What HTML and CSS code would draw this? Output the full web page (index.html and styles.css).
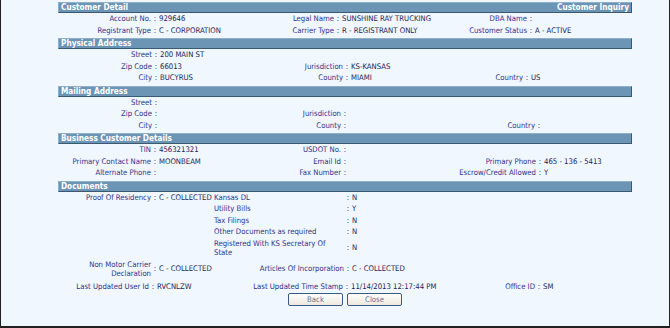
FILE: index.html
```html
<!DOCTYPE html>
<html>

<head>
    <link rel="stylesheet" href="styles.css">
</head>

<body>
    <div class="page">
        <div class="panel">
            <div class="bar"><span>Customer Detail</span><span>Customer Inquiry</span></div>
            <div class="fields customer">
                <span class="lbl">Account No.</span><span class="sep">:</span><span class="val">929646</span>
                <span class="lbl">Legal Name</span><span class="sep">:</span><span class="val">SUNSHINE RAY TRUCKING</span>
                <span class="lbl">DBA Name</span><span class="sep">:</span><span class="val"></span>
                <span class="lbl">Registrant Type</span><span class="sep">:</span><span class="val">C - CORPORATION</span>
                <span class="lbl">Carrier Type</span><span class="sep">:</span><span class="val">R - REGISTRANT ONLY</span>
                <span class="lbl">Customer Status</span><span class="sep">:</span><span class="val">A - ACTIVE</span>
            </div>

            <div class="bar"><span>Physical Address</span></div>
            <div class="fields physical">
                <span class="lbl">Street</span><span class="sep">:</span><span class="val">200 MAIN ST</span>
                <span class="lbl"></span><span class="sep"></span><span class="val"></span>
                <span class="lbl"></span><span class="sep"></span><span class="val"></span>
                <span class="lbl">Zip Code</span><span class="sep">:</span><span class="val">66013</span>
                <span class="lbl">Jurisdiction</span><span class="sep">:</span><span class="val">KS-KANSAS</span>
                <span class="lbl"></span><span class="sep"></span><span class="val"></span>
                <span class="lbl">City</span><span class="sep">:</span><span class="val">BUCYRUS</span>
                <span class="lbl">County</span><span class="sep">:</span><span class="val">MIAMI</span>
                <span class="lbl">Country</span><span class="sep">:</span><span class="val">US</span>
            </div>

            <div class="bar"><span>Mailing Address</span></div>
            <div class="fields mailing">
                <span class="lbl">Street</span><span class="sep">:</span><span class="val"></span>
                <span class="lbl"></span><span class="sep"></span><span class="val"></span>
                <span class="lbl"></span><span class="sep"></span><span class="val"></span>
                <span class="lbl">Zip Code</span><span class="sep">:</span><span class="val"></span>
                <span class="lbl">Jurisdiction</span><span class="sep">:</span><span class="val"></span>
                <span class="lbl"></span><span class="sep"></span><span class="val"></span>
                <span class="lbl">City</span><span class="sep">:</span><span class="val"></span>
                <span class="lbl">County</span><span class="sep">:</span><span class="val"></span>
                <span class="lbl">Country</span><span class="sep">:</span><span class="val"></span>
            </div>

            <div class="bar"><span>Business Customer Details</span></div>
            <div class="fields business">
                <span class="lbl">TIN</span><span class="sep">:</span><span class="val">456321321</span>
                <span class="lbl">USDOT No.</span><span class="sep">:</span><span class="val"></span>
                <span class="lbl"></span><span class="sep"></span><span class="val"></span>
                <span class="lbl">Primary Contact Name</span><span class="sep">:</span><span class="val">MOONBEAM</span>
                <span class="lbl">Email Id</span><span class="sep">:</span><span class="val"></span>
                <span class="lbl">Primary Phone</span><span class="sep">:</span><span class="val">465 - 136 - 5413</span>
                <span class="lbl">Alternate Phone</span><span class="sep">:</span><span class="val"></span>
                <span class="lbl">Fax Number</span><span class="sep">:</span><span class="val"></span>
                <span class="lbl">Escrow/Credit Allowed</span><span class="sep">:</span><span class="val">Y</span>
            </div>

            <div class="bar"><span>Documents</span></div>
            <div class="docs">
                <span class="lbl">Proof Of Residency</span><span class="sep">:</span><span class="val">C - COLLECTED</span>
                <span class="item">Kansas DL</span><span class="sep">:</span><span class="val">N</span>

                <span class="lbl"></span><span class="sep"></span><span class="val"></span>
                <span class="item">Utility Bills</span><span class="sep">:</span><span class="val">Y</span>

                <span class="lbl"></span><span class="sep"></span><span class="val"></span>
                <span class="item">Tax Filings</span><span class="sep">:</span><span class="val">N</span>

                <span class="lbl"></span><span class="sep"></span><span class="val"></span>
                <span class="item">Other Documents as required</span><span class="sep">:</span><span class="val">N</span>

                <span class="lbl"></span><span class="sep"></span><span class="val"></span>
                <span class="item">Registered With KS Secretary Of State</span><span class="sep">:</span><span class="val">N</span>

                <span class="lbl">Non Motor Carrier Declaration</span><span class="sep">:</span><span class="val">C - COLLECTED</span>
                <span class="item right">Articles Of Incorporation</span><span class="sep">:</span><span class="val">C - COLLECTED</span>
            </div>

            <div class="fields updated">
                <span class="lbl">Last Updated User Id</span><span class="sep">:</span><span class="val">RVCNLZW</span>
                <span class="lbl">Last Updated Time Stamp</span><span class="sep">:</span><span class="val">11/14/2013 12:17:44 PM</span>
                <span class="lbl">Office ID</span><span class="sep">:</span><span class="val">SM</span>
            </div>

            <div class="buttons">
                <button class="btn back">Back</button>
                <button class="btn close">Close</button>
            </div>
        </div>
    </div>
</body>

</html>
```

FILE: styles.css
```css
body {
    margin: 0;
}

.page {
    width: 670px;
    height: 328px;
    box-sizing: border-box;
    padding-top: 2px;
    background-color: #f0f7fe;
    border-left: 1px solid #222;
    border-right: 1px solid #222;
    border-bottom: 2px solid #222;
    font-family: "DejaVu Sans Condensed", "DejaVu Sans", sans-serif;
    font-stretch: condensed;
    font-size: 7.7px;
    color: #30308a;
}

.panel {
    margin-left: 57px;
    width: 574px;
}

.bar {
    display: flex;
    justify-content: space-between;
    height: 11px;
    box-sizing: border-box;
    margin-top: 2px;
    padding: 0 2px;
    background-color: #6b94b5;
    border: 1px solid;
    border-color: #8fb0c8 #3b5a71 #3b5a71 #8fb0c8;
    color: #fff;
    font-size: 8.2px;
    font-weight: bold;
    line-height: 9px;
    white-space: nowrap;
}

.bar:first-child {
    margin-top: 0;
}

.fields {
    display: grid;
}

.fields > span, .docs > span {
    padding: 1px 0;
    line-height: 9.5px;
    min-height: 9.5px;
}

.lbl {
    text-align: right;
}

.sep {
    text-align: center;
    align-self: center;
}

.val {
    color: #1d1d55;
    white-space: nowrap;
    align-self: center;
}

.customer {
    grid-template-columns: 93px 8px 90px 85px 8px 90px 95px 8px 97px;
}

.physical {
    grid-template-columns: 94px 8px 90px 93px 8px 90px 82px 8px 101px;
}

.mailing {
    grid-template-columns: 94px 8px 90px 91px 8px 90px 96px 8px 89px;
}

.business {
    grid-template-columns: 93px 8px 90px 92px 8px 90px 97px 8px 88px;
}

.updated {
    margin-top: 1px;
    grid-template-columns: 91px 8px 90px 96px 8px 90px 94px 8px 89px;
}

.docs {
    display: grid;
    grid-template-columns: 93px 8px 55px 130px 8px 280px;
}

.docs .lbl {
    align-self: center;
}

.docs .item {
    padding-right: 12px;
}

.docs .item.right {
    text-align: right;
    padding-right: 0;
    align-self: center;
}

.buttons {
    display: flex;
    justify-content: center;
    gap: 4px;
    margin-top: 1px;
}

.btn {
    height: 13px;
    width: 55px;
    padding: 0;
    background: linear-gradient(#fefefc, #ece9df);
    border: 1px solid #3c5a86;
    border-radius: 2px;
    font-family: "DejaVu Sans Condensed", "DejaVu Sans", sans-serif;
    font-stretch: condensed;
    font-size: 7.7px;
    line-height: 11px;
    color: #5f7394;
}
```
